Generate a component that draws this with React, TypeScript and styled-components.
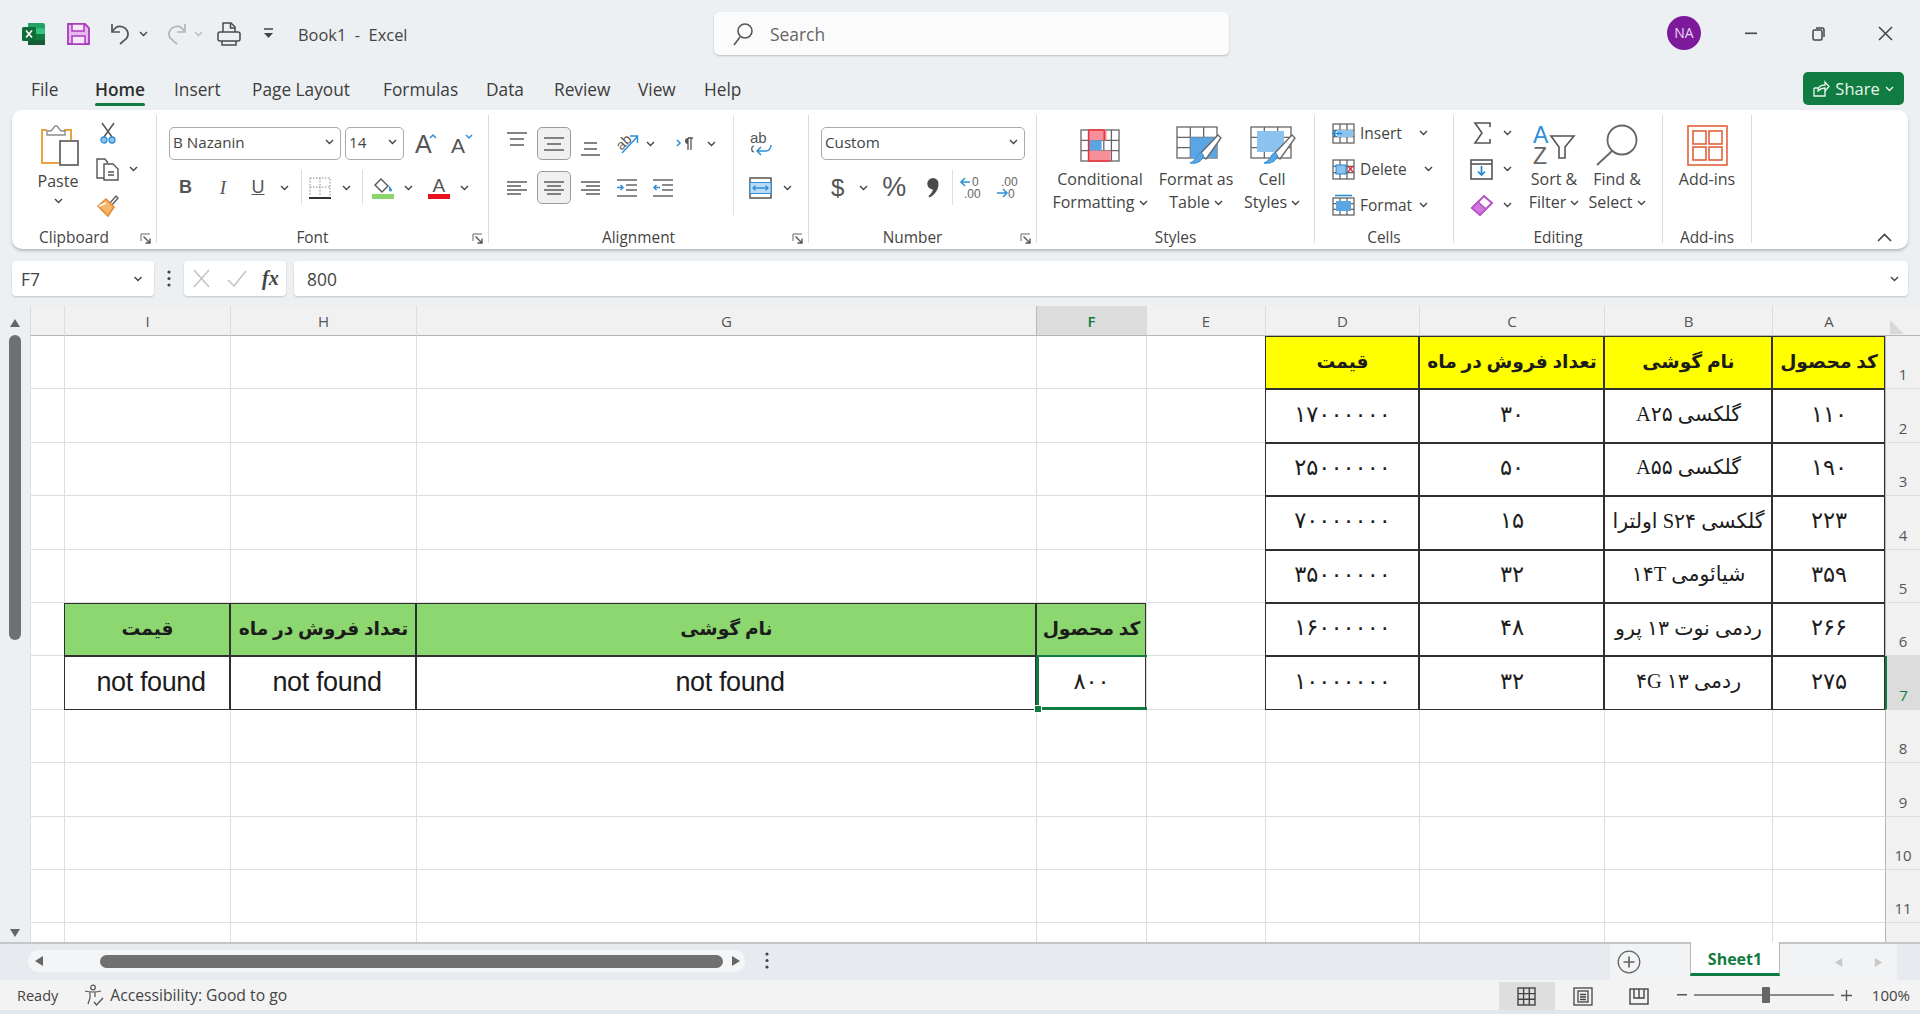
import React from "react";
import styled, { createGlobalStyle } from "styled-components";

const UI = `"Open Sans", "Noto Sans", "Liberation Sans", sans-serif`;
const Global = createGlobalStyle`
  html, body { margin: 0; padding: 0; background: #eceff3; }
  #root { width: 1920px; height: 1014px; overflow: hidden; }
  * { box-sizing: border-box; }
`;

const Page = styled.div`
  width: 1920px; height: 1014px; display: flex; flex-direction: column;
  background: #edf0f3; font-family: ${UI}; color: #3a3a3a; overflow: hidden;
`;

/* ---------- icon primitives ---------- */
const Svg = styled.svg<{ $ml?: number; $mt?: number; $mb?: number; $flip?: boolean }>`
  flex: none; display: block; overflow: visible;
  margin-left: ${(p) => p.$ml ?? 0}px; margin-top: ${(p) => p.$mt ?? 0}px; margin-bottom: ${(p) => p.$mb ?? 0}px;
  ${(p) => (p.$flip ? "transform: scaleX(-1);" : "")}
`;
const Chev = ({ ml = 0, c = "#444", w = 9, mt = 0 }: { ml?: number; c?: string; w?: number; mt?: number }) => (
  <Svg $ml={ml} $mt={mt} width={w} height={6} viewBox="0 0 9 6" fill="none">
    <path d="M1 1l3.5 3.5L8 1" stroke={c} strokeWidth="1.4" />
  </Svg>
);
const Lines = ({ ml = 0, mt = 0, mb = 0, rows, w = 20, h = 16 }: { ml?: number; mt?: number; mb?: number; rows: [number, number, number][]; w?: number; h?: number }) => (
  <Svg $ml={ml} $mt={mt} $mb={mb} width={w} height={h} viewBox={`0 0 ${w} ${h}`} fill="none">
    {rows.map(([y, a, b], i) => (
      <path key={i} d={`M${a} ${y}H${b}`} stroke="#666" strokeWidth="1.6" />
    ))}
  </Svg>
);
const Launcher = () => (
  <Svg width={12} height={11} viewBox="0 0 12 11" fill="none">
    <path d="M1 8V1h9" stroke="#666" />
    <path d="M3.5 3.5l6 6M10 5.5v4.5H5.5" stroke="#555" strokeWidth="1.4" />
  </Svg>
);

/* ---------- title bar ---------- */
const TitleBar = styled.header`
  height: 56px; flex: none; display: flex; align-items: center; padding-top: 11px;
`;
const QuickAccess = styled.div`
  flex: 0 0 714px; display: flex; align-items: center; padding-left: 22px;
`;
const DocTitle = styled.span`
  margin-left: 23px; font-size: 16.4px; color: #444; white-space: pre; margin-top: 2px;
`;
const SearchBox = styled.div`
  flex: 0 0 515px; height: 43px; background: #fbfbfc; border-radius: 5px;
  box-shadow: 0 1px 2px rgba(0,0,0,.22); display: flex; align-items: center; padding-left: 18px;
  color: #666; font-size: 17.4px; gap: 16px;
`;
const WindowControls = styled.div`
  flex: 1; display: flex; align-items: center; padding-left: 438px;
`;
const Avatar = styled.div`
  width: 34px; height: 34px; border-radius: 50%; background: #7d1a9c; color: #e9d9f0;
  display: flex; align-items: center; justify-content: center; font-size: 14px; margin-top: -2px;
`;

/* ---------- tabs ---------- */
const TabRow = styled.nav`
  height: 54px; flex: none; position: relative;
`;
const MenuTab = styled.span<{ $x: number; $active?: boolean }>`
  position: absolute; left: ${(p) => p.$x}px; top: 22px; font-size: 17.3px; line-height: 24px; color: #3c3c3c; white-space: nowrap;
  ${(p) => (p.$active ? `font-weight: 600; color:#2f2f2f; &::after { content:""; position:absolute; left:0; right:0; top:25px; height:3px; background:#107c41; border-radius:2px; }` : "")}
`;
const ShareBtn = styled.button`
  position: absolute; left: 1803px; top: 16px; width: 101px; height: 33px; border: 0; border-radius: 5px;
  background: #107c41; color: #eaf5ee; font: 400 16.5px ${UI}; display: flex; align-items: center; justify-content: center; gap: 5px; padding: 0;
`;

/* ---------- ribbon ---------- */
const Ribbon = styled.section`
  height: 139px; flex: none; margin: 0 12px; background: #fff; border-radius: 10px;
  box-shadow: 0 2px 3px rgba(0,0,0,.22); display: flex;
`;
const Group = styled.div<{ $w?: number; $last?: boolean }>`
  ${(p) => (p.$w ? `flex: 0 0 ${p.$w}px;` : "flex: 1;")}
  margin: 5px 0 6px; display: flex; flex-direction: column;
  border-right: ${(p) => (p.$last ? "0" : "1px solid #dcdcdc")};
`;
const GroupBody = styled.div`
  height: 114px; display: flex; flex: none;
`;
const Foot = styled.div`
  flex: 1; display: flex; align-items: center; padding-top: 2px;
`;
const FootLabel = styled.span`
  flex: 1; text-align: center; font-size: 15.4px; line-height: 14px; color: #444;
`;
const FootSide = styled.span<{ $w?: number; $pr?: number }>`
  flex: 0 0 ${(p) => p.$w ?? 20}px; display: flex; justify-content: flex-end; padding-right: ${(p) => p.$pr ?? 4}px;
`;
const Large = styled.div<{ $w: number; $pl?: number }>`
  flex: 0 0 ${(p) => p.$w}px; padding-top: 7px; padding-left: ${(p) => p.$pl ?? 0}px;
  display: flex; flex-direction: column; align-items: center;
`;
const LargeIcon = styled.div`
  height: 46px; display: flex; align-items: center; justify-content: center;
`;
const LargeText = styled.div<{ $mt?: number }>`
  font-size: 16px; line-height: 23px; margin-top: ${(p) => p.$mt ?? 0}px; color: #444; white-space: nowrap; display: flex; align-items: center; gap: 4px;
`;
const SmallCol = styled.div<{ $w?: number; $pl?: number }>`
  ${(p) => (p.$w ? `flex: 0 0 ${p.$w}px;` : "")} padding-left: ${(p) => p.$pl ?? 0}px;
  display: flex; flex-direction: column;
`;
const SmallRow = styled.div`
  height: 36px; flex: none; display: flex; align-items: center; font-size: 15.5px; color: #444;
`;
const SmallLabel = styled.span<{ $w: number }>`
  flex: 0 0 ${(p) => p.$w}px; margin-left: 5px;
`;
const ToolStack = styled.div<{ $w?: number; $pl?: number }>`
  ${(p) => (p.$w ? `flex: 0 0 ${p.$w}px;` : "")} padding-left: ${(p) => p.$pl ?? 0}px;
`;
const StylesInset = styled.div`
  flex: 0 0 12px;
`;
const ToolRow = styled.div<{ $top: number; $h: number }>`
  margin-top: ${(p) => p.$top}px; height: ${(p) => p.$h}px; display: flex; align-items: center;
`;
const Combo = styled.div<{ $w: number; $ml?: number }>`
  flex: 0 0 ${(p) => p.$w}px; margin-left: ${(p) => p.$ml ?? 0}px; height: 33px; border: 1px solid #a9a9a9; border-radius: 5px;
  background: #fff; display: flex; align-items: center; justify-content: space-between; padding: 0 6px 3px 3px;
  font-size: 15.2px; color: #444;
`;
const Toggle = styled.div<{ $ml: number }>`
  flex: 0 0 34px; height: 33px; margin-left: ${(p) => p.$ml}px; border: 1px solid #9c9c9c; border-radius: 5px;
  background: #f0f0f0; display: flex; align-items: center; justify-content: center;
`;
const Glyph = styled.span<{ $w: number; $ml: number; $size?: number; $bold?: boolean; $italic?: boolean; $under?: boolean; $serif?: boolean }>`
  flex: 0 0 ${(p) => p.$w}px; margin-left: ${(p) => p.$ml}px; text-align: center; color: #555;
  font: ${(p) => (p.$italic ? "italic " : "")}${(p) => (p.$bold ? 700 : 400)} ${(p) => p.$size ?? 17}px ${(p) => (p.$serif ? `"Liberation Serif", serif` : `"Liberation Sans", sans-serif`)};
  ${(p) => (p.$under ? "text-decoration: underline;" : "")}
`;
const InnerRule = styled.span<{ $ml: number }>`
  flex: 0 0 1px; margin-left: ${(p) => p.$ml}px; height: 35px; background: #dedede;
`;
const InnerSep = styled.span`
  flex: 0 0 1px; height: 100px; background: #e2e2e2;
`;

/* ---------- formula bar ---------- */
const FormulaBar = styled.div`
  height: 35px; flex: none; margin: 12px 12px 10px; display: flex; align-items: stretch;
`;
const Field = styled.div<{ $w?: number; $ml?: number; $pr?: number }>`
  ${(p) => (p.$w ? `flex: 0 0 ${p.$w}px;` : "flex: 1;")} margin-left: ${(p) => p.$ml ?? 0}px; background: #fff; border-radius: 4px;
  padding-right: ${(p) => p.$pr ?? 0}px;
  box-shadow: 0 1px 2px rgba(0,0,0,.18); display: flex; align-items: center; font-size: 17.4px; color: #444;
`;
const FieldText = styled.span<{ $pl: number }>`
  flex: 1; padding-left: ${(p) => p.$pl}px;
`;
const FxText = styled.span`
  font: italic 700 20px "Liberation Serif", serif; color: #444; margin-left: 15px;
`;
const KebabSlot = styled.div`
  flex: 0 0 30px; display: flex; align-items: center; justify-content: center;
`;

/* ---------- sheet ---------- */
const SheetArea = styled.main`
  flex: none; height: 636px; display: flex;
`;
const VScroll = styled.div`
  flex: 0 0 30px; display: flex; flex-direction: column; align-items: center; justify-content: flex-start; padding: 11px 0 3px;
`;
const VThumb = styled.div`
  width: 12px; height: 305px; margin: 6px 0 auto; background: #707070; border-radius: 6px;
`;
const SheetGrid = styled.div`
  flex: 1; direction: rtl; display: grid; background: #fff; overflow: hidden; height: 636px;
  grid-template-columns: 35px 113px 168px 185px 154px 119px 110px 620px 186px 166px 34px;
  grid-template-rows: 30px repeat(12, 53.4px);
`;
const Corner = styled.div`
  background: #f1f1f1; border-bottom: 1px solid #b5b5b5; display: flex; align-items: flex-end; justify-content: flex-end; padding: 0 0 1px 5px;
`;
const ColHead = styled.div<{ $on?: boolean }>`
  background: ${(p) => (p.$on ? "#dcdcdc" : "#f1f1f1")}; border-left: 1px solid ${(p) => (p.$on ? "#b8b8b8" : "#dcdcdc")};
  border-bottom: 1px solid #b5b5b5;
  color: ${(p) => (p.$on ? "#107c41" : "#555")}; font: ${(p) => (p.$on ? 600 : 400)} 15px ${UI};
  display: flex; align-items: center; justify-content: center;
`;
const RowHead = styled.div<{ $on?: boolean }>`
  position: relative; z-index: ${(p) => (p.$on ? 3 : 0)};
  background: ${(p) => (p.$on ? "#dcdcdc" : "#f1f1f1")}; border-bottom: 1px solid #dcdcdc;
  border-left: ${(p) => (p.$on ? "2px solid #107c41" : "1px solid #b5b5b5")};
  color: ${(p) => (p.$on ? "#107c41" : "#555")}; font: 400 15px ${UI};
  display: flex; align-items: flex-end; justify-content: center; padding: 0 0 4px 0;
`;
type CellKind = "plain" | "head" | "num" | "name" | "latin";
const CELL_FONT: Record<CellKind, string> = {
  plain: `400 17px "Liberation Serif", "DejaVu Sans", serif`,
  head: `700 18.7px "Liberation Serif", "DejaVu Sans", serif`,
  num: `400 22.5px "DejaVu Sans", serif`,
  name: `400 20.5px "Liberation Serif", "DejaVu Sans", serif`,
  latin: `400 27px "Liberation Sans", sans-serif`,
};
const CELL_PAD: Record<CellKind, string> = {
  plain: "0", head: "0 0 1px", num: "0 0 4px", name: "0 0 3px", latin: "0 0 1px 7px",
};
const Cell = styled.div<{ $fill?: string; $boxed?: boolean; $kind?: CellKind; $selected?: boolean }>`
  position: relative; background: ${(p) => p.$fill ?? "#fff"};
  border-left: 1px solid #dedede; border-bottom: 1px solid #dedede;
  ${(p) => (p.$boxed ? "outline: 1.6px solid #303030; outline-offset: -1px; z-index: 1;" : "")}
  ${(p) => (p.$selected ? "z-index: 2;" : "")}
  display: flex; align-items: center; justify-content: center; white-space: nowrap; overflow: visible; color: #1c1c1c;
  font: ${(p) => CELL_FONT[p.$kind ?? "plain"]};
  padding: ${(p) => CELL_PAD[p.$kind ?? "plain"]};
  ${(p) => (p.$kind === "latin" ? "letter-spacing: -0.4px;" : "")}
`;
const SelRing = styled.span`
  position: absolute; inset: -1px; border-top: 2px solid #107c41; border-bottom: 3px solid #107c41; border-left: 3px solid #107c41; pointer-events: none;
`;
const SelHandle = styled.span`
  position: absolute; left: -3px; bottom: -4px; width: 8px; height: 8px; background: #107c41; border: 1px solid #fff;
`;

/* ---------- bottom ---------- */
const TabBar = styled.div`
  height: 38px; flex: none; display: flex; background: #e7ebf0; border-top: 2px solid #c4c6c8;
`;
const HScroll = styled.div`
  flex: 0 0 717px; margin: 6px 0 0 28px; height: 22px; background: #f3f5f7; border-radius: 10px;
  display: flex; align-items: center; padding-left: 5px;
`;
const HThumb = styled.div`
  flex: 0 0 623px; height: 13px; margin-left: 55px; background: #707070; border-radius: 7px;
`;
const BarKebab = styled.div`
  flex: 0 0 44px; display: flex; justify-content: center; padding-top: 8px;
`;
const SheetNav = styled.div`
  flex: 0 0 287px; margin-left: auto; margin-right: 23px; background: #f2f3f5; display: flex; align-items: center;
`;
const SheetTab = styled.div`
  flex: 0 0 90px; height: 34px; margin: -2px 0 0 49px; align-self: flex-start; background: #fff; border: 1px solid #b9b9b9; border-top: 0;
  border-bottom: 3px solid #107c41; color: #107c41; font: 700 16px ${UI};
  display: flex; align-items: center; justify-content: center; padding-top: 2px;
`;
const StatusBar = styled.footer`
  height: 30px; flex: none; background: #f3f3f3; display: flex; align-items: center; font-size: 14.5px; color: #444; padding-left: 17px;
`;
const StatusText = styled.span<{ $ml?: number; $size?: number }>`
  margin-left: ${(p) => p.$ml ?? 0}px; ${(p) => (p.$size ? `font-size: ${p.$size}px;` : "")} white-space: nowrap;
`;
const ViewGroup = styled.div`
  margin-left: auto; display: flex; align-items: center; padding-right: 10px;
`;
const ViewBtn = styled.div<{ $on?: boolean }>`
  flex: 0 0 56px; height: 28px; margin-top: 2px; display: flex; align-items: center; justify-content: center;
  background: ${(p) => (p.$on ? "#dedede" : "transparent")};
`;
const Slider = styled.div`
  flex: 0 0 140px; margin: 0 7px; height: 2px; background: #8a8a8a; position: relative;
`;
const SliderKnob = styled.span`
  position: absolute; left: 68px; top: -7px; width: 8px; height: 16px; background: #666; border-radius: 1px;
`;
const BottomEdge = styled.div`
  flex: 1; background: #dfe8ee;
`;

/* ---------- icons ---------- */
const ExcelLogo = () => (
  <Svg width={23} height={22} viewBox="0 0 23 22">
    <path d="M6 0h15a2 2 0 0 1 2 2v18a2 2 0 0 1-2 2H6z" fill="#21a366" />
    <rect x="14" y="5.5" width="9" height="5.5" fill="#33c481" />
    <rect x="14" y="11" width="9" height="5.5" fill="#107c41" />
    <rect x="6" y="16.5" width="17" height="5.5" fill="#185c37" />
    <rect x="0" y="4" width="14" height="14" rx="1.5" fill="#0f6b38" />
    <path d="M4 7.5l6 7M10 7.5l-6 7" stroke="#fff" strokeWidth="1.7" />
  </Svg>
);
const SaveIcon = () => (
  <Svg $ml={22} width={23} height={22} viewBox="0 0 23 22" fill="none">
    <path d="M1 1h17l4 4v16H1z" fill="#e7b9ee" stroke="#a83cbd" strokeWidth="1.8" />
    <rect x="5" y="1" width="12" height="7" fill="#f7e6f9" stroke="#a83cbd" strokeWidth="1.5" />
    <rect x="5" y="13" width="13" height="8" fill="#f7e6f9" stroke="#a83cbd" strokeWidth="1.5" />
  </Svg>
);
const UndoIcon = ({ ml, c, flip }: { ml: number; c: string; flip?: boolean }) => (
  <Svg $ml={ml} $flip={flip} width={21} height={23} viewBox="0 0 21 23" fill="none">
    <path d="M2 2v8h8" stroke={c} strokeWidth="1.7" />
    <path d="M2.5 9.5C5 5 9 3.5 13 5c5 2 6.500 7.500 3.500 11.500L10 22" stroke={c} strokeWidth="1.7" />
  </Svg>
);
const PrintIcon = () => (
  <Svg $ml={14} width={24} height={24} viewBox="0 0 24 24" fill="none" stroke="#4a4a4a" strokeWidth="1.5">
    <path d="M6 10V1h8l4 4v5" />
    <path d="M13.500 1v5h4.500" />
    <rect x="1" y="10" width="22" height="9" rx="2" />
    <path d="M5 19v4h14v-4" />
  </Svg>
);
const CustomizeIcon = () => (
  <Svg $ml={21} width={13} height={11} viewBox="0 0 13 11" fill="none">
    <path d="M2 1h9" stroke="#444" strokeWidth="1.5" />
    <path d="M2 5h9l-4.500 5z" fill="#444" />
  </Svg>
);
const SearchGlass = () => (
  <Svg width={22} height={24} viewBox="0 0 22 24" fill="none" stroke="#555" strokeWidth="1.6">
    <circle cx="13" cy="9" r="7" />
    <path d="M8 15L2 23" />
  </Svg>
);
const WinMin = () => (
  <Svg $ml={44} width={12} height={3} viewBox="0 0 12 3"><rect width="12" height="1.600" y="0.500" fill="#444" /></Svg>
);
const WinRestore = () => (
  <Svg $ml={55} width={13} height={14} viewBox="0 0 13 14" fill="none" stroke="#444" strokeWidth="1.5">
    <rect x="1" y="3" width="9" height="10" rx="1.500" />
    <path d="M4 1h6a2 2 0 0 1 2 2v7" />
  </Svg>
);
const WinClose = () => (
  <Svg $ml={53} width={15} height={15} viewBox="0 0 15 15" fill="none" stroke="#444" strokeWidth="1.500">
    <path d="M1 1l13 13M14 1L1 14" />
  </Svg>
);
const ShareGlyph = () => (
  <Svg width={17} height={17} viewBox="0 0 17 17" fill="none" stroke="#eaf5ee" strokeWidth="1.300">
    <path d="M1 8h4M1 8v8h11v-5" />
    <path d="M5 11c0-4 3-6 7-6V2l4 4.500L12 11V8c-3 0-5 1-7 3z" />
  </Svg>
);
const PasteIcon = () => (
  <Svg $ml={3} width={38} height={43} viewBox="0 0 38 43" fill="none">
    <path d="M6 6H1v33h17M23 6h7v10" stroke="#eba340" strokeWidth="2" />
    <path d="M6 11V7h4l4-5h2l4 5h4v4z" fill="#fff" stroke="#8c8c8c" strokeWidth="1.300" />
    <rect x="19" y="17" width="18" height="24" fill="#fff" stroke="#555" strokeWidth="1.600" />
  </Svg>
);
const CutIcon = () => (
  <Svg $ml={4} width={16} height={22} viewBox="0 0 16 22" fill="none">
    <path d="M2 1l10 14M14 1L4 15" stroke="#555" strokeWidth="1.500" />
    <circle cx="4" cy="18" r="3" fill="#8bc3ee" stroke="#2f8fd6" strokeWidth="1.300" />
    <circle cx="12" cy="18" r="3" fill="#8bc3ee" stroke="#2f8fd6" strokeWidth="1.300" />
  </Svg>
);
const CopyIcon = () => (
  <Svg width={23} height={23} viewBox="0 0 23 23" fill="none" stroke="#555" strokeWidth="1.400">
    <path d="M8 20H1V1h8l3 4" />
    <path d="M8 6h9l5 5v11H8z" fill="#fff" />
    <path d="M12 14h6M12 17h6" />
  </Svg>
);
const PainterIcon = () => (
  <Svg width={23} height={23} viewBox="0 0 23 23" fill="none">
    <path d="M14 9l6-7 2 2-6 7" stroke="#666" strokeWidth="1.500" fill="#fff" />
    <path d="M10 5l8 8-6 9-10-10z" fill="#f4b66a" stroke="#e8872a" strokeWidth="1.500" />
    <path d="M3 12l7-3" stroke="#fff" strokeWidth="1.500" />
  </Svg>
);
const GrowFont = ({ ml, up }: { ml: number; up?: boolean }) => (
  <Svg $ml={ml} width={22} height={22} viewBox="0 0 22 22" fill="none">
    <text x="0" y="20" fontFamily="Liberation Sans" fontSize={up ? 25 : 21} fill="#555">A</text>
    <path d={up ? "M15 5l3-3 3 3" : "M15 2l3 3 3-3"} stroke="#2f8fd6" strokeWidth="1.500" />
  </Svg>
);
const BorderIcon = ({ ml }: { ml: number }) => (
  <Svg $ml={ml} width={22} height={22} viewBox="0 0 22 22" fill="none">
    <path d="M1 1h20v18M1 1v18M11 1v18M1 10h20" stroke="#8a8a8a" strokeDasharray="1.500 1.500" />
    <path d="M0 21h22" stroke="#333" strokeWidth="2" />
  </Svg>
);
const FillIcon = ({ ml }: { ml: number }) => (
  <Svg $ml={ml} width={22} height={22} viewBox="0 0 22 22" fill="none">
    <path d="M9 2l7 7-6 6-7-7z" stroke="#555" strokeWidth="1.400" fill="#fff" />
    <path d="M17 9c2 2 3 3 3 4a1.500 1.500 0 0 1-3 0c0-1 0-2 0-4z" fill="#2f8fd6" />
    <rect x="0" y="17" width="22" height="5" fill="#8bd56d" />
  </Svg>
);
const FontColorIcon = ({ ml }: { ml: number }) => (
  <Svg $ml={ml} width={22} height={22} viewBox="0 0 22 22">
    <text x="4.500" y="15" fontFamily="Liberation Sans" fontSize="19" fill="#555">A</text>
    <rect x="0" y="17" width="22" height="5" fill="#e8101c" />
  </Svg>
);
const OrientIcon = ({ ml }: { ml: number }) => (
  <Svg $ml={ml} width={25} height={22} viewBox="0 0 25 22" fill="none">
    <text x="2" y="15" fontFamily="Liberation Sans" fontSize="14" fill="#555" transform="rotate(-45 8 11)">ab</text>
    <path d="M7 20L22 4M15 3h7.500v7" stroke="#2f8fd6" strokeWidth="1.500" />
  </Svg>
);
const RtlIcon = ({ ml }: { ml: number }) => (
  <Svg $ml={ml} width={18} height={14} viewBox="0 0 18 14" fill="none">
    <path d="M1 3l3 3-3 3" stroke="#2f8fd6" strokeWidth="1.500" />
    <path d="M12 1h5M12 1v12M15 1v12" stroke="#555" strokeWidth="1.300" />
    <path d="M12 1a3 3 0 0 0-3 3 3 3 0 0 0 3 3z" fill="#555" />
  </Svg>
);
const WrapIcon = () => (
  <Svg width={23} height={23} viewBox="0 0 23 23" fill="none">
    <text x="1" y="11" fontFamily="Liberation Sans" fontSize="15" fill="#555">ab</text>
    <path d="M5 14c-3 0-3 6 0 6" stroke="#555" strokeWidth="1.200" />
    <path d="M22 13c0 3-2 6-5 6H9M12 15l-4 4 4 4" stroke="#2f8fd6" strokeWidth="1.500" />
  </Svg>
);
const MergeIcon = () => (
  <Svg width={23} height={22} viewBox="0 0 23 22" fill="none">
    <rect x="1" y="1" width="21" height="20" stroke="#555" strokeWidth="1.500" />
    <rect x="1" y="5.500" width="21" height="11" fill="#bcdcf5" stroke="#2f8fd6" />
    <path d="M3.500 11h16M6.500 8.500L4 11l2.500 2.500M16.500 8.500L19 11l-2.500 2.500" stroke="#2f8fd6" strokeWidth="1.300" />
  </Svg>
);
const IndentIcon = ({ ml, inc }: { ml: number; inc?: boolean }) => (
  <Svg $ml={ml} width={20} height={20} viewBox="0 0 20 20" fill="none">
    <path d="M0 2h20M9 7h11M9 12h11M0 18h20" stroke="#666" strokeWidth="1.500" />
    <path d={inc ? "M7 9.500H1M3.500 7L1 9.500 3.500 12" : "M0 9.500h6M3.500 7L6 9.500 3.500 12"} stroke="#2f8fd6" strokeWidth="1.500" />
  </Svg>
);
const CommaIcon = () => (
  <Svg $ml={21} width={12} height={20} viewBox="0 0 12 20">
    <path d="M6 0a5.500 5.500 0 0 1 5.500 6c0 6-4 11-9 13.500l-1-1.500c2.500-2 4.200-4.500 4.500-6.500A5.500 5.500 0 0 1 6 0z" fill="#4a4a4a" />
  </Svg>
);
const DecimalIcon = ({ ml, inc }: { ml: number; inc?: boolean }) => (
  <Svg $ml={ml} width={23} height={24} viewBox="0 0 23 24" fill="none">
    {inc ? (
      <>
        <text x="5" y="10" fontFamily="Liberation Sans" fontSize="12" fill="#666">.00</text>
        <text x="12" y="22" fontFamily="Liberation Sans" fontSize="12" fill="#666">0</text>
        <path d="M1 17h9M7 13l4 4-4 4" stroke="#2f8fd6" strokeWidth="1.500" />
      </>
    ) : (
      <>
        <text x="13" y="10" fontFamily="Liberation Sans" fontSize="12" fill="#666">0</text>
        <text x="5" y="22" fontFamily="Liberation Sans" fontSize="12" fill="#666">.00</text>
        <path d="M11 6H2M6 2L2 6l4 4" stroke="#2f8fd6" strokeWidth="1.500" />
      </>
    )}
  </Svg>
);
const TableGrid = ({ x, y, w, h, cols, rows }: { x: number; y: number; w: number; h: number; cols: number; rows: number }) => (
  <g stroke="#666" strokeWidth="1.300" fill="none">
    <rect x={x} y={y} width={w} height={h} />
    {Array.from({ length: cols - 1 }, (_, i) => <path key={i} d={`M${x + ((i + 1) * w) / cols} ${y}V${y + h}`} />)}
    {Array.from({ length: rows - 1 }, (_, i) => <path key={i} d={`M${x} ${y + ((i + 1) * h) / rows}H${x + w}`} />)}
  </g>
);
const CondIcon = () => (
  <Svg width={40} height={33} viewBox="0 0 40 33">
    <TableGrid x={1} y={1} w={38} h={31} cols={5} rows={3} />
    <rect x="8.600" y="1" width="18" height="10.300" fill="#f78f9b" />
    <rect x="8.600" y="11.300" width="13" height="10.300" fill="#5aa5e2" />
    <rect x="8.600" y="21.600" width="22" height="10.400" fill="#f78f9b" />
    <path d="M8.600 1h15M8.600 1v31h22M24.300 1v10" stroke="#e8303c" strokeWidth="1.500" fill="none" />
  </Svg>
);
const Brush = () => (
  <g>
    <path d="M24 28L42 9l3 3-15 21z" fill="#fff" stroke="#666" strokeWidth="1.300" />
    <path d="M14 37c6 1 10-1 12-4 3-3 1-6-2-6-3 1-3 7-10 10z" fill="#5aa5e2" stroke="#2f8fd6" />
  </g>
);
const FormatTableIcon = () => (
  <Svg $ml={4} width={45} height={38} viewBox="0 0 45 38">
    <TableGrid x={1} y={1} w={40} h={31} cols={3} rows={3} />
    <rect x="14.300" y="11.300" width="26.700" height="20.700" fill="#5aa5e2" />
    <Brush />
  </Svg>
);
const CellStylesIcon = () => (
  <Svg width={45} height={38} viewBox="0 0 45 38">
    <TableGrid x={1} y={1} w={40} h={31} cols={3} rows={3} />
    <rect x="7" y="5" width="27" height="21" fill="#8cc2ee" />
    <Brush />
  </Svg>
);
const InsertIcon = () => (
  <Svg width={23} height={21} viewBox="0 0 23 21" fill="none">
    <TableGrid x={1} y={1} w={21} h={19} cols={3} rows={3} />
    <rect x="5" y="7" width="16" height="7" fill="#8cc2ee" />
    <path d="M10 10.500H1M4 7.500L1 10.500l3 3" stroke="#1f86d6" strokeWidth="1.600" />
  </Svg>
);
const DeleteIcon = () => (
  <Svg width={23} height={21} viewBox="0 0 23 21" fill="none">
    <TableGrid x={1} y={1} w={21} h={19} cols={3} rows={3} />
    <rect x="4" y="6" width="10" height="9" fill="#8cc2ee" stroke="#1f86d6" />
    <path d="M16 7l5 6M21 7l-5 6" stroke="#e8303c" strokeWidth="1.500" />
  </Svg>
);
const FormatIcon = () => (
  <Svg width={23} height={22} viewBox="0 0 23 22" fill="none">
    <TableGrid x={1} y={4} w={21} h={17} cols={3} rows={3} />
    <rect x="4" y="7" width="15" height="10" fill="#5aa5e2" />
    <path d="M3 1.500h17" stroke="#1f86d6" strokeWidth="1.500" />
  </Svg>
);
const SigmaIcon = () => (
  <Svg $ml={3} width={18} height={22} viewBox="0 0 18 22" fill="none">
    <path d="M17 5V1H2l7 10-7 10h15v-4" stroke="#555" strokeWidth="1.600" />
  </Svg>
);
const FillDownIcon = () => (
  <Svg width={23} height={21} viewBox="0 0 23 21" fill="none">
    <rect x="1" y="1" width="21" height="19" stroke="#555" strokeWidth="1.600" />
    <path d="M1 5h21" stroke="#555" strokeWidth="1.600" />
    <path d="M11.500 7v9M8 12.500l3.500 3.500 3.500-3.500" stroke="#1f86d6" strokeWidth="1.700" />
  </Svg>
);
const EraserIcon = () => (
  <Svg width={23} height={21} viewBox="0 0 23 21" fill="none">
    <path d="M14 1l8 7-12 12-8-7z" fill="#fff" stroke="#b64fc8" strokeWidth="2" />
    <path d="M8 7l8 7-6 6-8-7z" fill="#cf79dc" stroke="#b64fc8" strokeWidth="1.500" />
  </Svg>
);
const SortIcon = () => (
  <Svg width={42} height={40} viewBox="0 0 42 40" fill="none">
    <text x="0" y="18" fontFamily="Liberation Sans" fontSize="23" fill="#2f8fd6">A</text>
    <text x="0" y="39" fontFamily="Liberation Sans" fontSize="23" fill="#666">Z</text>
    <path d="M18 11h23L32 22v11l-6 0V22z" stroke="#555" strokeWidth="1.600" />
  </Svg>
);
const FindIcon = () => (
  <Svg width={43} height={42} viewBox="0 0 43 42" fill="none" stroke="#666" strokeWidth="1.800">
    <circle cx="26" cy="16" r="14.500" />
    <path d="M16 27L1 41" />
  </Svg>
);
const AddInsIcon = () => (
  <Svg width={41} height={41} viewBox="0 0 41 41" fill="none" stroke="#e0623a" strokeWidth="1.600">
    <rect x="1" y="1" width="39" height="39" />
    <rect x="6" y="6" width="13" height="13" />
    <rect x="22" y="6" width="13" height="13" />
    <rect x="6" y="22" width="13" height="13" />
    <rect x="22" y="22" width="13" height="13" />
  </Svg>
);
const CollapseIcon = () => (
  <Svg width={15} height={9} viewBox="0 0 15 9" fill="none"><path d="M1 8l6.500-6.500L14 8" stroke="#444" strokeWidth="1.600" /></Svg>
);
const KebabDots = () => (
  <Svg width={4} height={17} viewBox="0 0 4 17" fill="#444">
    <circle cx="2" cy="2" r="1.600" /><circle cx="2" cy="8.500" r="1.600" /><circle cx="2" cy="15" r="1.600" />
  </Svg>
);
const Tri = ({ dir, c = "#666", s = 12, ml = 0 }: { dir: "u" | "d" | "l" | "r"; c?: string; s?: number; ml?: number }) => {
  const d = { u: "M1 10L6 2l5 8z", d: "M1 2l5 8 5-8z", l: "M10 1L2 6l8 5z", r: "M2 1l8 5-8 5z" }[dir];
  return <Svg $ml={ml} width={s} height={s} viewBox="0 0 12 12"><path d={d} fill={c} /></Svg>;
};
const SelectAll = () => (
  <Svg width={14} height={14} viewBox="0 0 14 14"><path d="M0 0v14h14z" fill="#d8d8d8" /></Svg>
);
const AddSheet = () => (
  <Svg $ml={7} width={24} height={24} viewBox="0 0 24 24" fill="none" stroke="#666">
    <circle cx="12" cy="12" r="10.800" strokeWidth="1.300" />
    <path d="M12 6.500v11M6.500 12h11" strokeWidth="1.700" />
  </Svg>
);
const AccessIcon = () => (
  <Svg $ml={26} width={20} height={22} viewBox="0 0 20 22" fill="none" stroke="#555" strokeWidth="1.200">
    <circle cx="9" cy="3.500" r="2.300" />
    <path d="M1 7c3 1 5 1 8 1s5 0 8-1M6 8v6l-2 6M11 8v5" />
    <path d="M10 18l2.500 3L19 14" strokeWidth="1.400" />
  </Svg>
);
const NormalView = () => (
  <Svg width={19} height={19} viewBox="0 0 19 19" fill="none" stroke="#444" strokeWidth="1.400">
    <rect x="1" y="1" width="17" height="17" />
    <path d="M6.600 1v17M12.300 1v17M1 6.600h17M1 12.300h17" />
  </Svg>
);
const LayoutView = () => (
  <Svg width={20} height={19} viewBox="0 0 20 19" fill="none" stroke="#444" strokeWidth="1.300">
    <rect x="1" y="1" width="18" height="17" />
    <rect x="5" y="4" width="10" height="11" />
    <path d="M7 7.500h6M7 10h6M7 12.500h6" />
  </Svg>
);
const BreakView = () => (
  <Svg width={20} height={17} viewBox="0 0 20 17" fill="none" stroke="#444" strokeWidth="1.400">
    <rect x="1" y="1" width="18" height="15" />
    <path d="M5 1v9h10V1M10 1v9" />
  </Svg>
);
const ZoomMinus = () => (
  <Svg $ml={10} width={10} height={2} viewBox="0 0 10 2"><rect width="10" height="1.500" fill="#555" /></Svg>
);
const ZoomPlus = () => (
  <Svg width={11} height={11} viewBox="0 0 11 11" fill="none">
    <path d="M0 5.500h11M5.500 0v11" stroke="#555" strokeWidth="1.300" />
  </Svg>
);
const BarX = () => (
  <Svg $ml={9} width={17} height={19} viewBox="0 0 17 19" fill="none"><path d="M1 1l15 17M16 1L1 18" stroke="#c2c2c2" strokeWidth="1.500" /></Svg>
);
const BarCheck = () => (
  <Svg $ml={17} width={20} height={17} viewBox="0 0 20 17" fill="none"><path d="M1 10l6 6L19 1" stroke="#c2c2c2" strokeWidth="1.500" /></Svg>
);

/* ---------- data ---------- */
const LETTERS = ["A", "B", "C", "D", "E", "F", "G", "H", "I", ""];
const HEADERS = ["کد محصول", "نام گوشی", "تعداد فروش در ماه", "قیمت"];
const ROWS = [
  ["۱۱۰", "گلکسی A۲۵", "۳۰", "۱۷۰۰۰۰۰۰"],
  ["۱۹۰", "گلکسی A۵۵", "۵۰", "۲۵۰۰۰۰۰۰"],
  ["۲۲۳", "گلکسی S۲۴ اولترا", "۱۵", "۷۰۰۰۰۰۰۰"],
  ["۳۵۹", "شیائومی \u2066۱۴T\u2069", "۳۲", "۳۵۰۰۰۰۰۰"],
  ["۲۶۶", "ردمی نوت ۱۳ پرو", "۴۸", "۱۶۰۰۰۰۰۰"],
  ["۲۷۵", "ردمی ۱۳ \u2066۴G\u2069", "۳۲", "۱۰۰۰۰۰۰۰"],
];
const YELLOW = "#ffff00";
const GREEN = "#8cd76f";

const renderGrid = () => {
  const out: React.ReactNode[] = [
    <Corner key="corner"><SelectAll /></Corner>,
    ...LETTERS.map((l) => <ColHead key={`h${l}`} $on={l === "F"}>{l}</ColHead>),
  ];
  for (let r = 1; r <= 12; r++) {
    out.push(<RowHead key={`r${r}`} $on={r === 7}>{r < 12 ? r : ""}</RowHead>);
    LETTERS.forEach((_, c) => {
      const key = `${r}-${c}`;
      if (r === 1 && c < 4) out.push(<Cell key={key} $fill={YELLOW} $boxed $kind="head">{HEADERS[c]}</Cell>);
      else if (r >= 2 && r <= 7 && c < 4) out.push(<Cell key={key} $boxed $kind={c === 1 ? "name" : "num"}>{ROWS[r - 2][c]}</Cell>);
      else if (r === 6 && c >= 5 && c <= 8) out.push(<Cell key={key} $fill={GREEN} $boxed $kind="head">{HEADERS[c - 5]}</Cell>);
      else if (r === 7 && c === 5) out.push(<Cell key={key} $boxed $selected $kind="num">۸۰۰<SelRing /><SelHandle /></Cell>);
      else if (r === 7 && c > 5 && c <= 8) out.push(<Cell key={key} $boxed $kind="latin">not found</Cell>);
      else out.push(<Cell key={key} />);
    });
  }
  return out;
};

export default function App() {
  return (
    <Page>
      <Global />
      <TitleBar>
        <QuickAccess>
          <ExcelLogo />
          <SaveIcon />
          <UndoIcon ml={20} c="#555" />
          <Chev ml={8} />
          <UndoIcon ml={18} c="#b5b5b5" flip />
          <Chev ml={7} c="#bbb" />
          <PrintIcon />
          <CustomizeIcon />
          <DocTitle>Book1  -  Excel</DocTitle>
        </QuickAccess>
        <SearchBox><SearchGlass />Search</SearchBox>
        <WindowControls>
          <Avatar>NA</Avatar>
          <WinMin />
          <WinRestore />
          <WinClose />
        </WindowControls>
      </TitleBar>

      <TabRow>
        <MenuTab $x={31}>File</MenuTab>
        <MenuTab $x={95} $active>Home</MenuTab>
        <MenuTab $x={174}>Insert</MenuTab>
        <MenuTab $x={252}>Page Layout</MenuTab>
        <MenuTab $x={383}>Formulas</MenuTab>
        <MenuTab $x={486}>Data</MenuTab>
        <MenuTab $x={554}>Review</MenuTab>
        <MenuTab $x={638}>View</MenuTab>
        <MenuTab $x={704}>Help</MenuTab>
        <ShareBtn><ShareGlyph />Share<Chev c="#eaf5ee" /></ShareBtn>
      </TabRow>

      <Ribbon>
        <Group $w={145}>
          <GroupBody>
            <Large $w={84} $pl={8}>
              <LargeIcon><PasteIcon /></LargeIcon>
              <LargeText $mt={2}>Paste</LargeText>
              <LargeText $mt={5}><Chev /></LargeText>
            </Large>
            <SmallCol>
              <SmallRow><CutIcon /></SmallRow>
              <SmallRow><CopyIcon /><Chev ml={10} /></SmallRow>
              <SmallRow><PainterIcon /></SmallRow>
            </SmallCol>
          </GroupBody>
          <Foot><FootLabel>Clipboard</FootLabel><FootSide><Launcher /></FootSide></Foot>
        </Group>

        <Group $w={332}>
          <GroupBody>
            <ToolStack $pl={12}>
              <ToolRow $top={12} $h={33}>
                <Combo $w={172}>B Nazanin<Chev /></Combo>
                <Combo $w={59} $ml={4}>14<Chev /></Combo>
                <GrowFont ml={11} up />
                <GrowFont ml={14} />
              </ToolRow>
              <ToolRow $top={10} $h={35}>
                <Glyph $w={10} $ml={10} $bold $size={18}>B</Glyph>
                <Glyph $w={8} $ml={27} $italic $serif $size={19}>I</Glyph>
                <Glyph $w={14} $ml={24} $under $size={18}>U</Glyph>
                <Chev ml={15} />
                <InnerRule $ml={12} />
                <BorderIcon ml={7} />
                <Chev ml={11} />
                <InnerRule $ml={11} />
                <FillIcon ml={9} />
                <Chev ml={10} />
                <FontColorIcon ml={15} />
                <Chev ml={10} />
              </ToolRow>
            </ToolStack>
          </GroupBody>
          <Foot><FootLabel>Font</FootLabel><FootSide><Launcher /></FootSide></Foot>
        </Group>

        <Group $w={320}>
          <GroupBody>
            <ToolStack $w={244} $pl={18}>
              <ToolRow $top={12} $h={33}>
                <Lines mb={9} rows={[[2, 0, 20], [8, 3, 17], [14, 3, 17]]} />
                <Toggle $ml={10}><Lines rows={[[2, 0, 20], [8, 3, 17], [14, 0, 20]]} /></Toggle>
                <Lines ml={10} mt={11} rows={[[2, 3, 16], [8, 3, 16], [14, 0, 19]]} w={19} h={16} />
                <OrientIcon ml={15} />
                <Chev ml={6} />
                <RtlIcon ml={21} />
                <Chev ml={13} />
              </ToolRow>
              <ToolRow $top={11} $h={33}>
                <Lines rows={[[2, 0, 20], [6, 0, 14], [10, 0, 20], [14, 0, 14]]} />
                <Toggle $ml={10}><Lines rows={[[2, 0, 20], [6, 3, 17], [10, 0, 20], [14, 3, 17]]} /></Toggle>
                <Lines ml={10} w={19} rows={[[2, 0, 19], [6, 5, 19], [10, 0, 19], [14, 5, 19]]} />
                <IndentIcon ml={17} />
                <IndentIcon ml={16} inc />
              </ToolRow>
            </ToolStack>
            <InnerSep />
            <ToolStack $pl={15}>
              <ToolRow $top={16} $h={24}><WrapIcon /></ToolRow>
              <ToolRow $top={21} $h={24}><MergeIcon /><Chev ml={11} /></ToolRow>
            </ToolStack>
          </GroupBody>
          <Foot><FootLabel>Alignment</FootLabel><FootSide><Launcher /></FootSide></Foot>
        </Group>

        <Group $w={228}>
          <GroupBody>
            <ToolStack $pl={12}>
              <ToolRow $top={12} $h={33}><Combo $w={204}>Custom<Chev /></Combo></ToolRow>
              <ToolRow $top={10} $h={35}>
                <Glyph $w={13} $ml={10} $size={24}>$</Glyph>
                <Chev ml={15} />
                <Glyph $w={22} $ml={14} $size={27}>%</Glyph>
                <CommaIcon />
                <InnerRule $ml={13} />
                <DecimalIcon ml={6} />
                <DecimalIcon ml={14} inc />
              </ToolRow>
            </ToolStack>
          </GroupBody>
          <Foot><FootLabel>Number</FootLabel><FootSide><Launcher /></FootSide></Foot>
        </Group>

        <Group $w={278}>
          <GroupBody>
            <StylesInset />
            <Large $w={102}><LargeIcon><CondIcon /></LargeIcon><LargeText>Conditional</LargeText><LargeText>Formatting<Chev /></LargeText></Large>
            <Large $w={90}><LargeIcon><FormatTableIcon /></LargeIcon><LargeText>Format as</LargeText><LargeText>Table<Chev /></LargeText></Large>
            <Large $w={62}><LargeIcon><CellStylesIcon /></LargeIcon><LargeText>Cell</LargeText><LargeText>Styles<Chev /></LargeText></Large>
          </GroupBody>
          <Foot><FootLabel>Styles</FootLabel></Foot>
        </Group>

        <Group $w={139}>
          <GroupBody>
            <SmallCol $pl={17}>
              <SmallRow><InsertIcon /><SmallLabel $w={59}>Insert</SmallLabel><Chev /></SmallRow>
              <SmallRow><DeleteIcon /><SmallLabel $w={64}>Delete</SmallLabel><Chev /></SmallRow>
              <SmallRow><FormatIcon /><SmallLabel $w={59}>Format</SmallLabel><Chev /></SmallRow>
            </SmallCol>
          </GroupBody>
          <Foot><FootLabel>Cells</FootLabel></Foot>
        </Group>

        <Group $w={209}>
          <GroupBody>
            <SmallCol $w={73} $pl={16}>
              <SmallRow><SigmaIcon /><Chev ml={12} /></SmallRow>
              <SmallRow><FillDownIcon /><Chev ml={10} /></SmallRow>
              <SmallRow><EraserIcon /><Chev ml={10} /></SmallRow>
            </SmallCol>
            <Large $w={54}><LargeIcon><SortIcon /></LargeIcon><LargeText>Sort &amp;</LargeText><LargeText>Filter<Chev /></LargeText></Large>
            <Large $w={72}><LargeIcon><FindIcon /></LargeIcon><LargeText>Find &amp;</LargeText><LargeText>Select<Chev /></LargeText></Large>
          </GroupBody>
          <Foot><FootLabel>Editing</FootLabel></Foot>
        </Group>

        <Group $w={89}>
          <GroupBody>
            <Large $w={88}><LargeIcon><AddInsIcon /></LargeIcon><LargeText>Add-ins</LargeText></Large>
          </GroupBody>
          <Foot><FootLabel>Add-ins</FootLabel></Foot>
        </Group>

        <Group $last>
          <GroupBody />
          <Foot>
            <FootLabel />
            <FootSide $w={35} $pr={16}><CollapseIcon /></FootSide>
          </Foot>
        </Group>
      </Ribbon>

      <FormulaBar>
        <Field $w={142} $pr={10}><FieldText $pl={9}>F7</FieldText><Chev w={12} /></Field>
        <KebabSlot><KebabDots /></KebabSlot>
        <Field $w={102}><BarX /><BarCheck /><FxText>fx</FxText></Field>
        <Field $ml={8} $pr={7}><FieldText $pl={13}>800</FieldText><Chev w={13} /></Field>
      </FormulaBar>

      <SheetArea>
        <VScroll>
          <Tri dir="u" s={12} />
          <VThumb />
          <Tri dir="d" s={12} />
        </VScroll>
        <SheetGrid>{renderGrid()}</SheetGrid>
      </SheetArea>

      <TabBar>
        <HScroll>
          <Tri dir="l" s={12} />
          <HThumb />
          <Tri dir="r" s={12} ml={7} />
        </HScroll>
        <BarKebab><KebabDots /></BarKebab>
        <SheetNav>
          <AddSheet />
          <SheetTab>Sheet1</SheetTab>
          <Tri dir="l" c="#c8c8c8" s={11} ml={53} />
          <Tri dir="r" c="#c8c8c8" s={11} ml={29} />
        </SheetNav>
      </TabBar>

      <StatusBar>
        <StatusText>Ready</StatusText>
        <AccessIcon />
        <StatusText $ml={6} $size={15.7}>Accessibility: Good to go</StatusText>
        <ViewGroup>
          <ViewBtn $on><NormalView /></ViewBtn>
          <ViewBtn><LayoutView /></ViewBtn>
          <ViewBtn><BreakView /></ViewBtn>
          <ZoomMinus />
          <Slider><SliderKnob /></Slider>
          <ZoomPlus />
          <StatusText $ml={20} $size={15}>100%</StatusText>
        </ViewGroup>
      </StatusBar>
      <BottomEdge />
    </Page>
  );
}
